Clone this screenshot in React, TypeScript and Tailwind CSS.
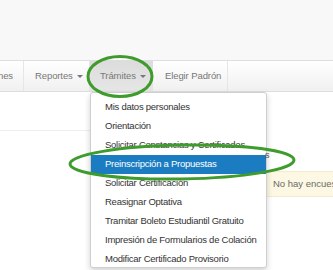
import React from "react";

const items = [
  "Mis datos personales",
  "Orientación",
  "Solicitar Constancias y Certificados",
  "Preinscripción a Propuestas",
  "Solicitar Certificación",
  "Reasignar Optativa",
  "Tramitar Boleto Estudiantil Gratuito",
  "Impresión de Formularios de Colación",
  "Modificar Certificado Provisorio",
];

function Caret() {
  return <span className="ml-[4px] inline-block w-0 h-0 border-l-[3px] border-r-[3px] border-t-[3px] border-l-transparent border-r-transparent border-t-[#777] align-middle" />;
}

export default function App() {
  return (
    <div className="relative w-[333px] h-[270px] overflow-hidden bg-white" style={{ fontFamily: '"Liberation Sans", Arial, sans-serif' }}>
      <div className="h-[60px] bg-[#f8f8f8]" />
      <div className="h-[32px] flex items-stretch border-y border-[#dedede] bg-gradient-to-b from-white to-[#f0f0f0] text-[9.5px] text-[#777] tracking-[-0.1px]">
        <div className="flex items-center w-[24px] justify-end pr-[10px] border-r border-[#e6e6e6]">
          <span className="whitespace-nowrap">ones</span>
        </div>
        <div className="flex items-center pl-[11px] pr-[9px] w-[66px] border-r border-[#e6e6e6] whitespace-nowrap">
          Reportes<Caret />
        </div>
        <div className="flex items-center pl-[10px] w-[63px] bg-gradient-to-b from-[#dcdcdc] to-[#e6e6e6] whitespace-nowrap">
          Trámites<Caret />
        </div>
        <div className="flex items-center pl-[12px] w-[75px] border-r border-[#e6e6e6] whitespace-nowrap">
          Elegir Padrón
        </div>
      </div>
      <div className="flex flex-col pt-[38px]">
        <div className="w-[90px] border-t border-[#efefef]" />
        <div className="mt-[40px] ml-[260px] w-[90px] h-[26px] bg-[#fcf8e3] border border-[#f7ecc9] flex items-center pl-[12px] text-[9.5px] text-[#6b6b6b] whitespace-nowrap">
          No hay encuestas
        </div>
      </div>
      <div className="absolute left-[90px] top-[92px] w-[177px] h-[176px] bg-white border border-[#cfcfcf] rounded-[3px] shadow-[0_3px_6px_rgba(0,0,0,0.18)] pt-[5px] text-[9.5px] text-[#333] tracking-[-0.25px]">
        {items.map((t, i) => (
          <div
            key={t}
            className={
              "h-[19px] flex items-center pl-[14px] whitespace-nowrap " +
              (i === 3 ? "bg-[#1b7cc2] text-white" : "")
            }
          >
            {t}
          </div>
        ))}
      </div>
      <span className="absolute left-[265px] top-[149px] text-[9px] text-[#555]">s</span>
      <svg className="absolute left-0 top-0" width="333" height="270" viewBox="0 0 333 270">
        <ellipse cx="120" cy="76.5" rx="32" ry="20" fill="none" stroke="#3e9c2c" strokeWidth="3" />
        <ellipse cx="182" cy="162" rx="112" ry="17" fill="none" stroke="#3e9c2c" strokeWidth="3" transform="rotate(-1 182 162)" />
      </svg>
    </div>
  );
}
